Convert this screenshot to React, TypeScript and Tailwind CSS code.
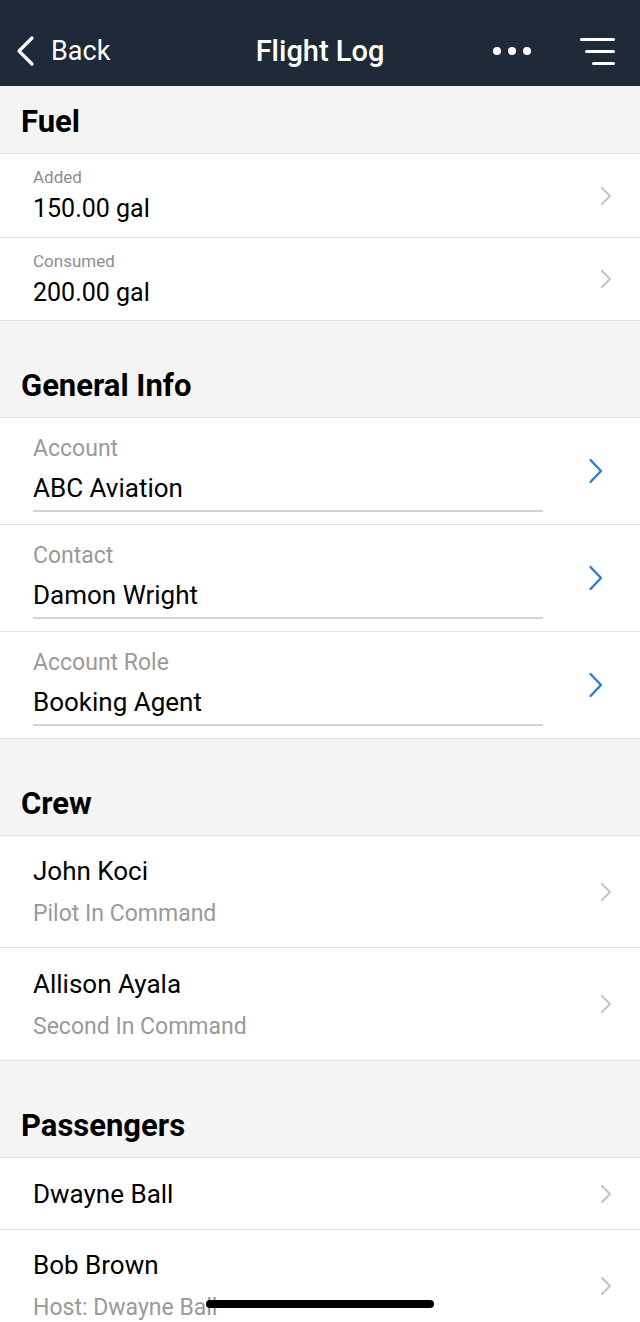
import React from "react";

const font = { fontFamily: "Roboto, 'Liberation Sans', sans-serif" };

function Chevron({ blue }: { blue?: boolean }) {
  if (blue) {
    return (
      <svg width="16" height="26" viewBox="0 0 16 26" className="shrink-0">
        <path d="M2.5 2 L13 13 L2.5 24" fill="none" stroke="#2d7dd2" strokeWidth="2.4" strokeLinecap="round" strokeLinejoin="round" />
      </svg>
    );
  }
  return (
    <svg width="12" height="20" viewBox="0 0 12 20" className="shrink-0">
      <path d="M2 2 L10 10 L2 18" fill="none" stroke="#c5c5c7" strokeWidth="2.2" strokeLinecap="round" strokeLinejoin="round" />
    </svg>
  );
}

function SectionHeader({ title, first }: { title: string; first?: boolean }) {
  return (
    <div
      className={`flex items-end bg-[#f4f4f4] border-b border-[#e2e2e2] pl-[21px] pb-[13px] ${first ? "h-[68px]" : "h-[97px]"}`}
    >
      <span className="text-[31px] leading-[36px] font-bold text-black">{title}</span>
    </div>
  );
}

function FuelRow({ label, value, h }: { label: string; value: string; h: string }) {
  return (
    <div className={`flex items-center ${h} bg-white border-b border-[#e2e2e2] pl-[33px] pr-[28px]`}>
      <div className="flex-1">
        <div className="text-[17px] leading-[20px] text-[#8e8e8e]">{label}</div>
        <div className="mt-[7px] text-[25px] leading-[30px] text-black">{value}</div>
      </div>
      <Chevron />
    </div>
  );
}

function FieldRow({ label, value }: { label: string; value: string }) {
  return (
    <div className="flex h-[107px] bg-white border-b border-[#e2e2e2]">
      <div className="ml-[33px] w-[510px] pt-[17px]">
        <div className="text-[23px] leading-[28px] text-[#9a9a9a]">{label}</div>
        <div className="mt-[9px] pb-[6px] border-b-2 border-[#d4d4d4] text-[26px] leading-[32px] text-black">{value}</div>
      </div>
      <div className="flex-1 flex items-center justify-center pl-[8px]">
        <Chevron blue />
      </div>
    </div>
  );
}

function PersonRow({ name, sub, h }: { name: string; sub?: string; h: string }) {
  return (
    <div className={`flex items-center ${h} bg-white border-b border-[#e2e2e2] pl-[33px] pr-[28px]`}>
      <div className="flex-1">
        <div className="text-[26px] leading-[32px] text-black">{name}</div>
        {sub && <div className="mt-[13px] text-[23px] leading-[28px] text-[#9a9a9a]">{sub}</div>}
      </div>
      <Chevron />
    </div>
  );
}

export default function App() {
  return (
    <div className="relative w-[640px] h-[1322px] overflow-hidden bg-white" style={font}>
      <div className="flex items-center h-[86px] pt-[16px] bg-[#1e2a37] text-white">
        <div className="flex items-center w-[190px] pl-[14px]">
          <svg width="22" height="32" viewBox="0 0 22 32">
            <path d="M18 3 L5 16 L18 29" fill="none" stroke="#ffffff" strokeWidth="3.2" strokeLinecap="round" strokeLinejoin="round" />
          </svg>
          <span className="ml-[15px] text-[27px] leading-[32px]">Back</span>
        </div>
        <div className="flex-1 text-center text-[29px] leading-[34px] font-medium">Flight Log</div>
        <div className="flex items-center justify-end w-[190px] pr-[25px]">
          <div className="flex gap-[7px]">
            <span className="w-[8px] h-[8px] rounded-full bg-white" />
            <span className="w-[8px] h-[8px] rounded-full bg-white" />
            <span className="w-[8px] h-[8px] rounded-full bg-white" />
          </div>
          <div className="ml-[49px] flex flex-col items-end gap-[9px]">
            <span className="block w-[35px] h-[3px] rounded-full bg-white" />
            <span className="block w-[30px] h-[3px] rounded-full bg-white" />
            <span className="block w-[23px] h-[3px] rounded-full bg-white" />
          </div>
        </div>
      </div>

      <SectionHeader title="Fuel" first />
      <FuelRow label="Added" value="150.00 gal" h="h-[84px]" />
      <FuelRow label="Consumed" value="200.00 gal" h="h-[83px]" />

      <SectionHeader title="General Info" />
      <FieldRow label="Account" value="ABC Aviation" />
      <FieldRow label="Contact" value="Damon Wright" />
      <FieldRow label="Account Role" value="Booking Agent" />

      <SectionHeader title="Crew" />
      <PersonRow name="John Koci" sub="Pilot In Command" h="h-[112px]" />
      <PersonRow name="Allison Ayala" sub="Second In Command" h="h-[113px]" />

      <SectionHeader title="Passengers" />
      <PersonRow name="Dwayne Ball" h="h-[72px]" />
      <PersonRow name="Bob Brown" sub="Host: Dwayne Ball" h="h-[112px]" />

      <div className="absolute left-[206px] top-[1300px] w-[228px] h-[8px] rounded-full bg-black" />
    </div>
  );
}
